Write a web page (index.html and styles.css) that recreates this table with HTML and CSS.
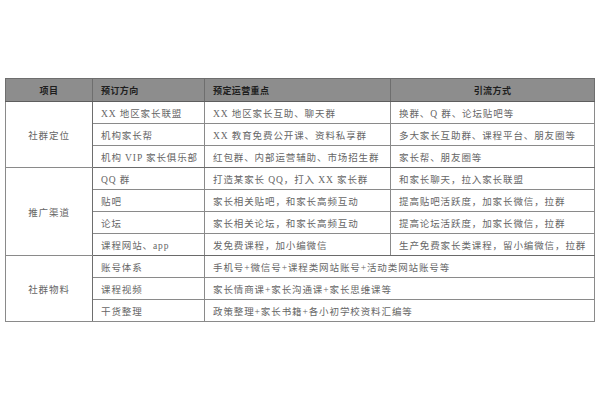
FILE: index.html
```html
<!DOCTYPE html>
<html lang="zh">
<head>
<meta charset="utf-8">
<link rel="stylesheet" href="styles.css">
</head>
<body>
<div class="page">
<table class="plan">
  <colgroup>
    <col class="c1"><col class="c2"><col class="c3"><col class="c4">
  </colgroup>
  <thead>
    <tr>
      <th class="center">项目</th>
      <th>预订方向</th>
      <th>预定运营重点</th>
      <th class="center">引流方式</th>
    </tr>
  </thead>
  <tbody>
    <tr>
      <td class="cat" rowspan="3">社群定位</td>
      <td>XX 地区家长联盟</td>
      <td>XX 地区家长互助、聊天群</td>
      <td>换群、Q 群、论坛贴吧等</td>
    </tr>
    <tr>
      <td>机构家长帮</td>
      <td>XX 教育免费公开课、资料私享群</td>
      <td>多大家长互助群、课程平台、朋友圈等</td>
    </tr>
    <tr class="sec-end">
      <td>机构 VIP 家长俱乐部</td>
      <td>红包群、内部运营辅助、市场招生群</td>
      <td>家长帮、朋友圈等</td>
    </tr>
    <tr>
      <td class="cat" rowspan="4">推广渠道</td>
      <td>QQ 群</td>
      <td>打造某家长 QQ，打入 XX 家长群</td>
      <td>和家长聊天，拉入家长联盟</td>
    </tr>
    <tr>
      <td>贴吧</td>
      <td>家长相关贴吧，和家长高频互动</td>
      <td>提高贴吧活跃度，加家长微信，拉群</td>
    </tr>
    <tr>
      <td>论坛</td>
      <td>家长相关论坛，和家长高频互动</td>
      <td>提高论坛活跃度，加家长微信，拉群</td>
    </tr>
    <tr class="sec-end">
      <td>课程网站、app</td>
      <td>发免费课程，加小编微信</td>
      <td>生产免费家长类课程，留小编微信，拉群</td>
    </tr>
    <tr>
      <td class="cat" rowspan="3">社群物料</td>
      <td>账号体系</td>
      <td colspan="2">手机号+微信号+课程类网站账号+活动类网站账号等</td>
    </tr>
    <tr>
      <td>课程视频</td>
      <td colspan="2">家长情商课+家长沟通课+家长思维课等</td>
    </tr>
    <tr>
      <td>干货整理</td>
      <td colspan="2">政策整理+家长书籍+各小初学校资料汇编等</td>
    </tr>
  </tbody>
</table>
</div>
</body>
</html>
```

FILE: styles.css
```css
html, body {
  margin: 0;
  padding: 0;
  background: #ffffff;
}

.page {
  padding: 78px 6px 0 5px;
}

.plan {
  width: 589px;
  border-collapse: collapse;
  table-layout: fixed;
  font-family: "Liberation Serif", "Noto Sans CJK SC", serif;
  font-size: 9px;
  color: #666666;
  border: 1px solid #6e6e6e;
}

.c1 { width: 87px; }
.c2 { width: 112px; }
.c3 { width: 186px; }
.c4 { width: 204px; }

.plan th {
  height: 22px;
  padding: 0 0 0 8px;
  background: #8d8d8d;
  color: #1e1e1e;
  font-weight: bold;
  text-align: left;
  letter-spacing: 0.4px;
  border: 1px solid #6e6e6e;
  border-bottom: 1px solid #5e5e5e;
}

.plan th.center {
  text-align: center;
  padding: 0;
}

.plan td {
  height: 21px;
  padding: 0 0 0 8px;
  font-size: 9.5px;
  letter-spacing: 0.9px;
  white-space: nowrap;
  border: 1px solid #8a8a8a;
  vertical-align: middle;
}

.plan td.cat {
  text-align: center;
  padding: 0;
  border-right: 1px solid #6e6e6e;
}

.plan tr.sec-end td {
  border-bottom: 1px solid #6a6a6a;
}
```
